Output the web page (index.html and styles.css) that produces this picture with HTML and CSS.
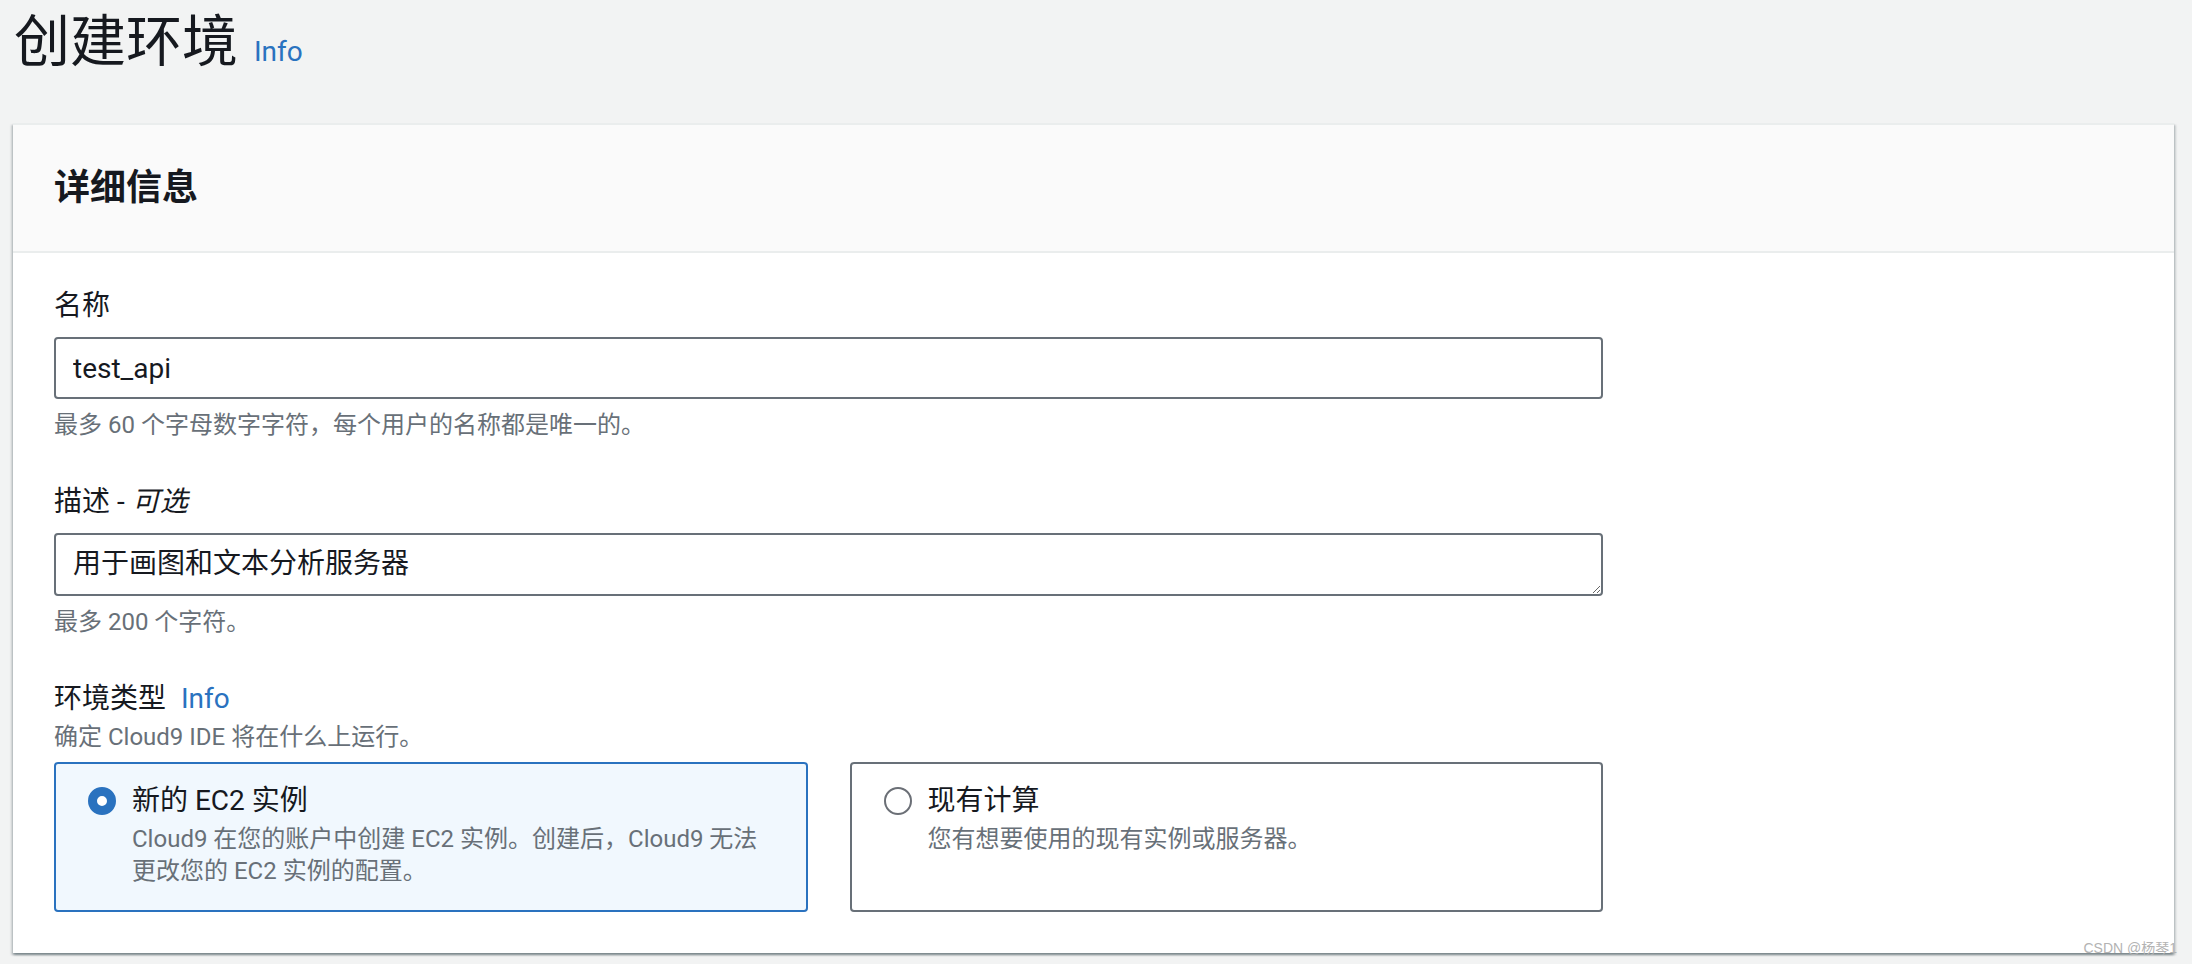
FILE: index.html
```html
<!DOCTYPE html>
<html lang="zh-CN">
<head>
  <meta charset="UTF-8">
  <meta name="viewport" content="width=device-width, initial-scale=1.0">
  <title>创建环境</title>
  <link rel="stylesheet" href="styles.css">
</head>
<body>

  <div class="page-header">
    <h1 class="page-title">创建环境</h1>
    <a class="info-link" href="#">Info</a>
  </div>

  <div class="container">
    <div class="container-header">
      <h2>详细信息</h2>
    </div>

    <div class="container-body">
      <div class="field">
        <label class="field-label" for="envName">名称</label>
        <input class="text-input" id="envName" type="text" value="test_api">
        <div class="field-help">最多 60 个字母数字字符，每个用户的名称都是唯一的。</div>
      </div>

      <div class="field">
        <label class="field-label" for="envDesc">描述 - <i>可选</i></label>
        <textarea class="text-area" id="envDesc" rows="1">用于画图和文本分析服务器</textarea>
        <div class="field-help">最多 200 个字符。</div>
      </div>

      <div class="field field-last">
        <div class="field-label">环境类型 <a class="info-link" href="#">Info</a></div>
        <div class="field-desc">确定 Cloud9 IDE 将在什么上运行。</div>

        <div class="tiles">
          <div class="tile selected">
            <div class="tile-title">
              <svg class="radio" width="28" height="28" viewBox="0 0 28 28">
                <circle cx="14" cy="14" r="9.5" fill="#fff" stroke="#2a72bf" stroke-width="9"/>
              </svg>
              <span>新的 EC2 实例</span>
            </div>
            <div class="tile-desc">Cloud9 在您的账户中创建 EC2 实例。创建后，Cloud9 无法<br>更改您的 EC2 实例的配置。</div>
          </div>

          <div class="tile">
            <div class="tile-title">
              <svg class="radio" width="28" height="28" viewBox="0 0 28 28">
                <circle cx="14" cy="14" r="13" fill="#fff" stroke="#6b6f76" stroke-width="2"/>
              </svg>
              <span>现有计算</span>
            </div>
            <div class="tile-desc">您有想要使用的现有实例或服务器。</div>
          </div>
        </div>
      </div>
    </div>
  </div>

  <div class="watermark">CSDN @杨琴1</div>

</body>
</html>
```

FILE: styles.css
```css
body {
  margin: 0;
  background-color: #f2f3f3;
  font-family: Roboto, "Noto Sans CJK SC", sans-serif;
  color: #16191f;
  position: relative;
  height: 964px;
  overflow: hidden;
}
.page-header {
  display: flex;
  align-items: baseline;
  gap: 16px;
  padding: 2px 0 0 14px;
  height: 78px;
}
.page-title {
  margin: 0;
  font-size: 56px;
  font-weight: 400;
  line-height: 80px;
}
.info-link {
  color: #2a72bf;
  font-size: 28px;
  text-decoration: none;
}
.container {
  margin: 43px 18px 0 13px;
  background-color: #fff;
  border-top: 2px solid #eaeded;
  box-shadow: 0 2px 2px rgba(0, 28, 36, 0.3), 2px 2px 2px rgba(0, 28, 36, 0.15), -2px 2px 2px rgba(0, 28, 36, 0.15);
}
.container-header {
  background-color: #fafafa;
  padding: 40px 41px;
  border-bottom: 2px solid #eaeded;
}
.container-header h2 {
  margin: 0;
  font-size: 36px;
  font-weight: 700;
  line-height: 46px;
}
.container-body {
  padding: 33px 41px 41px;
}
.field {
  margin-bottom: 41px;
  max-width: 1549px;
}
.field-last {
  margin-bottom: 0;
}
.field-label {
  display: block;
  font-size: 28px;
  line-height: 40px;
  margin-bottom: 11px;
}
.field-label i {
  font-style: italic;
}
.field-last .field-label {
  margin-bottom: 2px;
}
.field-label .info-link {
  margin-left: 8px;
}
.text-input,
.text-area {
  display: block;
  box-sizing: border-box;
  width: 100%;
  border: 2px solid #687078;
  border-radius: 4px;
  font-family: Roboto, "Noto Sans CJK SC", sans-serif;
  font-size: 28px;
  color: #16191f;
  background-color: #fff;
  outline: none;
}
.text-input {
  height: 62px;
  padding: 0 17px;
}
.text-area {
  height: 63px;
  padding: 9px 17px;
  line-height: 40px;
  resize: vertical;
  overflow: hidden;
}
.field-help {
  margin-top: 10px;
  font-size: 24px;
  line-height: 32px;
  color: #687078;
}
.field-desc {
  font-size: 24px;
  line-height: 32px;
  color: #687078;
}
.tiles {
  display: grid;
  grid-template-columns: 1fr 1fr;
  gap: 42px;
  margin-top: 9px;
}
.tile {
  border: 2px solid #687078;
  border-radius: 4px;
  padding: 17px 30px 23px 32px;
  background-color: #fff;
}
.tile.selected {
  border-color: #2a72bf;
  background-color: #f1f8fe;
}
.tile-title {
  display: flex;
  align-items: center;
  gap: 16px;
  font-size: 28px;
  line-height: 40px;
}
.radio {
  flex-shrink: 0;
}
.tile-desc {
  margin-top: 2px;
  margin-left: 44px;
  font-size: 24px;
  line-height: 32px;
  color: #687078;
}
.watermark {
  position: absolute;
  top: 940px;
  right: 15px;
  font-family: "Liberation Sans", "Noto Sans CJK SC", sans-serif;
  font-size: 14px;
  line-height: 16px;
  color: #b3b3b3;
}
```
